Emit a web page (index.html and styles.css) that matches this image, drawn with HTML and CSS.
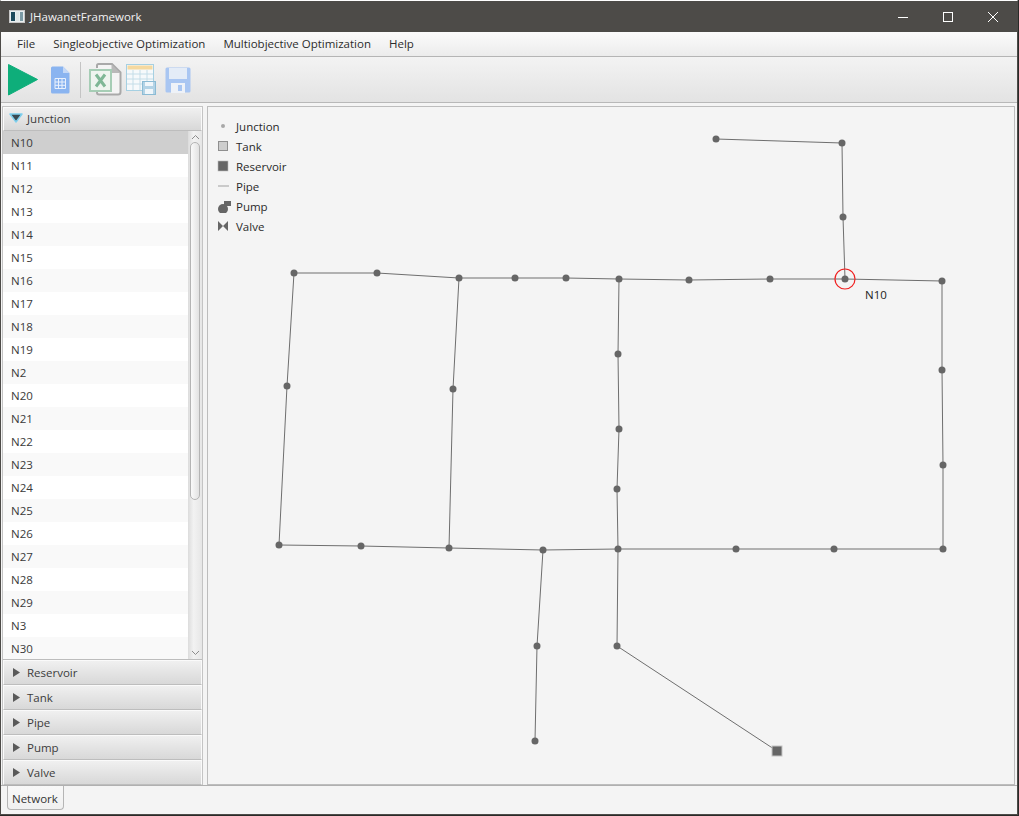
FILE: index.html
```html
<!DOCTYPE html>
<html lang="en">
<head>
<meta charset="utf-8">
<title>JHawanetFramework</title>
<link rel="stylesheet" href="styles.css">
</head>
<body>
<div class="window">
  <header class="titlebar">
    <svg class="app-icon" width="16" height="13" viewBox="0 0 16 13"><rect x="0.5" y="0.5" width="15" height="12" fill="#e8eef0" stroke="#c8c8c8"/><rect x="2" y="2" width="4" height="9" fill="#1d4a5c"/><rect x="7" y="2" width="3" height="9" fill="#dfe6e6"/><rect x="11" y="2" width="3" height="9" fill="#7b9aa5"/></svg>
    <span class="app-title">JHawanetFramework</span>
    <div class="win-buttons">
      <svg width="12" height="12" viewBox="0 0 12 12"><path d="M1 6.5H11" stroke="#fff" fill="none"/></svg>
      <svg width="12" height="12" viewBox="0 0 12 12"><rect x="1.5" y="1.5" width="9" height="9" stroke="#fff" fill="none"/></svg>
      <svg width="12" height="12" viewBox="0 0 12 12"><path d="M1 1L11 11M11 1L1 11" stroke="#fff" fill="none"/></svg>
    </div>
  </header>
  <nav class="menubar">
    <span class="menu">File</span>
    <span class="menu">Singleobjective Optimization</span>
    <span class="menu">Multiobjective Optimization</span>
    <span class="menu">Help</span>
  </nav>
  <div class="toolbar">
    <svg class="tool play" width="30" height="33" viewBox="0 0 30 33"><path d="M0.5 1.5L29.5 16.5L0.5 32Z" fill="#0eae7a" stroke="#0eae7a" stroke-linejoin="round"/></svg>
    <svg class="tool doc" width="20" height="28" viewBox="0 0 20 28"><path d="M1 2Q1 0.5 2.5 0.5H13L19.5 7V26Q19.5 27.5 18 27.5H2.5Q1 27.5 1 26Z" fill="#8ab4f0"/><path d="M13 0.5V7H19.5Z" fill="#c4d8f6"/><path d="M5 12.5H15.5V22.5H5ZM5 16H15.5M5 19.3H15.5M8.5 12.5V22.5M12 12.5V22.5" fill="none" stroke="#e9f1fd"/></svg>
    <span class="tool-sep"></span>
    <svg class="tool xls" width="33" height="33" viewBox="0 0 33 33"><path d="M8 5V2.5Q8 1 9.5 1H23L31.5 9.5V29Q31.5 31.5 29 31.5H10Q8 31.5 8 29.5V27" fill="#f4f4f4" stroke="#a9a9a9" stroke-width="2"/><path d="M22.5 1.5V10H31Z" fill="#b9b9b9"/><rect x="1" y="7" width="21" height="21" fill="#eef4ef" stroke="#a6cdb5" stroke-width="2"/><path d="M7 11.5L16 23.5M16 11.5L7 23.5" stroke="#7fb796" stroke-width="3" fill="none"/></svg>
    <svg class="tool table" width="31" height="31" viewBox="0 0 31 31"><rect x="0.5" y="0.5" width="27" height="26" fill="#f6f9fb" stroke="#a6d0e2"/><rect x="1.5" y="1.5" width="25" height="4" fill="#f5d9a0"/><path d="M1 10H27M1 15H27M1 20H27M7 6V26M14 6V26M21 6V26" stroke="#c4dde8" fill="none"/><rect x="16.500" y="17.500" width="13" height="13" fill="#b3d3e6" stroke="#8bbbd4"/><rect x="19" y="18" width="8" height="4" fill="#f0f6fa"/><rect x="19" y="25" width="8" height="5" fill="#f0f6fa"/></svg>
    <svg class="tool save" width="26" height="26" viewBox="0 0 26 26"><path d="M0.5 2Q0.5 0.5 2 0.5H24Q25.500 0.5 25.500 2V24Q25.500 25.500 24 25.500H2Q0.500 25.500 0.500 24Z" fill="#a9c6f2"/><rect x="4" y="1" width="18" height="11" fill="#e4ecf7"/><rect x="6" y="16" width="14" height="10" fill="#eef2f8"/><rect x="13" y="18" width="4" height="6" fill="#a9c6f2"/></svg>
  </div>
  <main class="main">
    <aside class="accordion">
      <div class="pane-title open"><svg class="arrow-open" width="14" height="12" viewBox="0 0 14 12"><path d="M1 2H13L7 10Z" fill="#3a4a52" stroke="#7fd0ee" stroke-width="1.500" stroke-linejoin="round"/></svg><span>Junction</span></div>
      <div class="list-wrap">
        <ul class="list">
          <li class="selected">N10</li><li>N11</li><li>N12</li><li>N13</li><li>N14</li><li>N15</li><li>N16</li><li>N17</li><li>N18</li><li>N19</li><li>N2</li><li>N20</li><li>N21</li><li>N22</li><li>N23</li><li>N24</li><li>N25</li><li>N26</li><li>N27</li><li>N28</li><li>N29</li><li>N3</li><li>N30</li>
        </ul>
        <div class="scrollbar">
          <svg class="scroll-arrow" width="9" height="6" viewBox="0 0 9 6"><path d="M1 5L4.500 1.500L8 5" fill="none" stroke="#8c8c8c"/></svg>
          <div class="track"><div class="thumb"></div></div>
          <svg class="scroll-arrow" width="9" height="6" viewBox="0 0 9 6"><path d="M1 1L4.500 4.500L8 1" fill="none" stroke="#8c8c8c"/></svg>
        </div>
      </div>
      <div class="pane-title"><svg class="arrow" width="7" height="9" viewBox="0 0 7 9"><path d="M0 0L7 4.500L0 9Z" fill="#5a5a5a"/></svg><span>Reservoir</span></div>
      <div class="pane-title"><svg class="arrow" width="7" height="9" viewBox="0 0 7 9"><path d="M0 0L7 4.500L0 9Z" fill="#5a5a5a"/></svg><span>Tank</span></div>
      <div class="pane-title"><svg class="arrow" width="7" height="9" viewBox="0 0 7 9"><path d="M0 0L7 4.500L0 9Z" fill="#5a5a5a"/></svg><span>Pipe</span></div>
      <div class="pane-title"><svg class="arrow" width="7" height="9" viewBox="0 0 7 9"><path d="M0 0L7 4.500L0 9Z" fill="#5a5a5a"/></svg><span>Pump</span></div>
      <div class="pane-title"><svg class="arrow" width="7" height="9" viewBox="0 0 7 9"><path d="M0 0L7 4.500L0 9Z" fill="#5a5a5a"/></svg><span>Valve</span></div>
    </aside>
    <section class="canvas">
      <svg class="network" viewBox="207 106 808 679" width="808" height="679">
        <g class="pipes">
          <polyline points="716,139 842,143 843,217 845,279"/>
          <polyline points="294,273 377,273 459,278 515,278 566,278 619,279 689,280 770,279 845,279 942,281 942,370 943,465 943,549 834,549 736,549 618,549 543,550 449,548 361,546 279,545 287,386 294,273"/>
          <polyline points="459,278 453,389 449,548"/>
          <polyline points="619,279 618,354 619,429 617,489 618,549 617,646 777,751"/>
          <polyline points="543,550 537,646 535,741"/>
        </g>
        <g class="nodes">
          <circle cx="716" cy="139" r="3.500"/><circle cx="842" cy="143" r="3.500"/><circle cx="843" cy="217" r="3.500"/><circle cx="845" cy="279" r="3.500"/><circle cx="942" cy="281" r="3.500"/><circle cx="942" cy="370" r="3.500"/><circle cx="943" cy="465" r="3.500"/><circle cx="943" cy="549" r="3.500"/><circle cx="834" cy="549" r="3.500"/><circle cx="736" cy="549" r="3.500"/><circle cx="618" cy="549" r="3.500"/><circle cx="543" cy="550" r="3.500"/><circle cx="449" cy="548" r="3.500"/><circle cx="361" cy="546" r="3.500"/><circle cx="279" cy="545" r="3.500"/><circle cx="287" cy="386" r="3.500"/><circle cx="294" cy="273" r="3.500"/><circle cx="377" cy="273" r="3.500"/><circle cx="459" cy="278" r="3.500"/><circle cx="515" cy="278" r="3.500"/><circle cx="566" cy="278" r="3.500"/><circle cx="619" cy="279" r="3.500"/><circle cx="689" cy="280" r="3.500"/><circle cx="770" cy="279" r="3.500"/><circle cx="453" cy="389" r="3.500"/><circle cx="618" cy="354" r="3.500"/><circle cx="619" cy="429" r="3.500"/><circle cx="617" cy="489" r="3.500"/><circle cx="617" cy="646" r="3.500"/><circle cx="537" cy="646" r="3.500"/><circle cx="535" cy="741" r="3.500"/>
        </g>
        <rect class="reservoir" x="772" y="746" width="10" height="10"/>
        <circle class="selection" cx="845" cy="279" r="10"/>
        <text class="node-label" x="865" y="299">N10</text>
      </svg>
      <ul class="legend">
        <li><svg width="14" height="14" viewBox="0 0 14 14"><circle cx="6" cy="7" r="2" fill="#a8a8a8"/></svg>Junction</li>
        <li><svg width="14" height="14" viewBox="0 0 14 14"><rect x="1.500" y="2.500" width="9" height="9" fill="#cdcdcd" stroke="#8f8f8f"/></svg>Tank</li>
        <li><svg width="14" height="14" viewBox="0 0 14 14"><rect x="1" y="2" width="10" height="10" fill="#666" stroke="#bbb" stroke-width="0.600"/></svg>Reservoir</li>
        <li><svg width="14" height="14" viewBox="0 0 14 14"><path d="M1 7H12" stroke="#a0a0a0" stroke-width="1"/></svg>Pipe</li>
        <li><svg width="14" height="14" viewBox="0 0 14 14"><circle cx="6" cy="10" r="5" fill="#666"/><rect x="7" y="2" width="8" height="5" fill="#666"/></svg>Pump</li>
        <li><svg width="14" height="14" viewBox="0 0 14 14"><path d="M1 2L6 7L1 12ZM11 2L6 7L11 12Z" fill="#666"/></svg>Valve</li>
      </ul>
    </section>
  </main>
  <footer class="tabs">
    <div class="tab">Network</div>
  </footer>
</div>
</body>
</html>
```

FILE: styles.css
```css
* { box-sizing: border-box; }
html, body { margin: 0; padding: 0; background: #2a2a28; }
body { font-family: "Open Sans", "Noto Sans", sans-serif; font-size: 11.5px; color: #333; }
ul { list-style: none; margin: 0; padding: 0; }

.window {
  width: 1018px; height: 815px;
  border: 1px solid #4d4b48; border-top: 1px solid #fff;
  background: #f4f4f4;
  display: flex; flex-direction: column;
  overflow: hidden;
}

.titlebar {
  height: 31px; flex: none;
  background: #4d4b48; color: #fff;
  display: flex; align-items: center;
  padding-left: 8px;
}
.app-icon { margin-right: 5px; }
.app-title { font-size: 11.5px; color: #f2f2f2; }
.win-buttons { margin-left: auto; display: flex; gap: 33px; padding-right: 18px; }

.menubar {
  height: 25px; flex: none;
  background: linear-gradient(#fbfbfb, #ececec);
  border-bottom: 1px solid #b5b5b5;
  display: flex; align-items: center; gap: 18px;
  padding: 0 0 1px 16px; color: #2c2c2c;
}

.toolbar {
  height: 46px; flex: none;
  background: linear-gradient(#f3f3f3, #e3e3e3);
  border-bottom: 1px solid #b8b8b8;
  display: flex; align-items: center;
  padding-left: 7px;
}
.tool { flex: none; display: block; }
.play { margin-right: 12px; }
.doc { margin-right: 10px; }
.tool-sep { width: 1px; height: 36px; background: #c4c4c4; margin-right: 8px; }
.xls { margin-right: 4px; }
.table { margin-right: 8px; }

.main {
  height: 683px; flex: none;
  display: flex; gap: 4px;
  padding: 3px 2px 0 1px;
  border-bottom: 1px solid #b0b0b0;
}

.accordion {
  width: 201px; flex: none;
  border: 1px solid #c4c4c4; border-bottom: 0;
  background: #f4f4f4;
  display: flex; flex-direction: column;
}
.pane-title {
  height: 25px; flex: none;
  background: linear-gradient(#f0f0f0, #d8d8d8);
  border: 1px solid #fafafa; border-bottom: 1px solid #bdbdbd;
  display: flex; align-items: center;
  padding-left: 9px; color: #3c3c3c;
}
.pane-title .arrow { margin-right: 7px; }
.pane-title.open { padding: 0 0 2px 5px; height: 24px; }
.arrow-open { margin-right: 4px; }

.list-wrap { height: 529px; flex: none; display: flex; background: #fff; border-bottom: 1px solid #bdbdbd; }
.list { flex: 1; overflow: hidden; }
.list li { height: 23px; padding-left: 8px; line-height: 23px; background: #fff; color: #3a3a3a; }
.list li:nth-child(odd) { background: #f9f9f9; }
.list li.selected { background: #cfcfcf; }

.scrollbar {
  width: 14px; flex: none;
  background: linear-gradient(90deg, #dcdcdc, #f2f2f2 40%, #e6e6e6);
  display: flex; flex-direction: column; align-items: center;
  padding: 3px 0;
}
.scroll-arrow { flex: none; }
.track { flex: 1; width: 100%; padding: 0 2px; margin-top: 2px; }
.thumb {
  height: 358px;
  background: linear-gradient(90deg, #fafafa, #e2e2e2);
  border: 1px solid #b4b4b4; border-radius: 5px;
}

.canvas {
  width: 808px; flex: none; position: relative;
  background: #f4f4f4;
  border: 1px solid #bdbdbd;
  overflow: hidden;
}
.network { display: block; position: absolute; left: -1px; top: -1px; }
.pipes polyline { fill: none; stroke: #6e6e6e; stroke-width: 1; }
.nodes circle { fill: #666; }
.reservoir { fill: #666; stroke: #c4c4c4; stroke-width: 1; }
.selection { fill: none; stroke: #f02020; stroke-width: 1.2; }
.node-label { font-family: "Open Sans", "Noto Sans", sans-serif; font-size: 11.5px; fill: #222; }

.legend { position: absolute; left: 9px; top: 9px; color: #2a2a2a; }
.legend li { height: 20px; display: flex; align-items: center; gap: 5px; }
.legend svg { flex: none; }

.tabs { height: 28px; flex: none; padding: 0 0 0 6px; display: flex; align-items: flex-start; }
.tab {
  height: 24px; padding: 0 5px 0 4px; line-height: 25px;
  background: linear-gradient(#f8f8f8, #f0f0f0);
  border: 1px solid #b5b5b5; border-top: 0;
  border-radius: 0 0 4px 4px;
  color: #333;
}
```
